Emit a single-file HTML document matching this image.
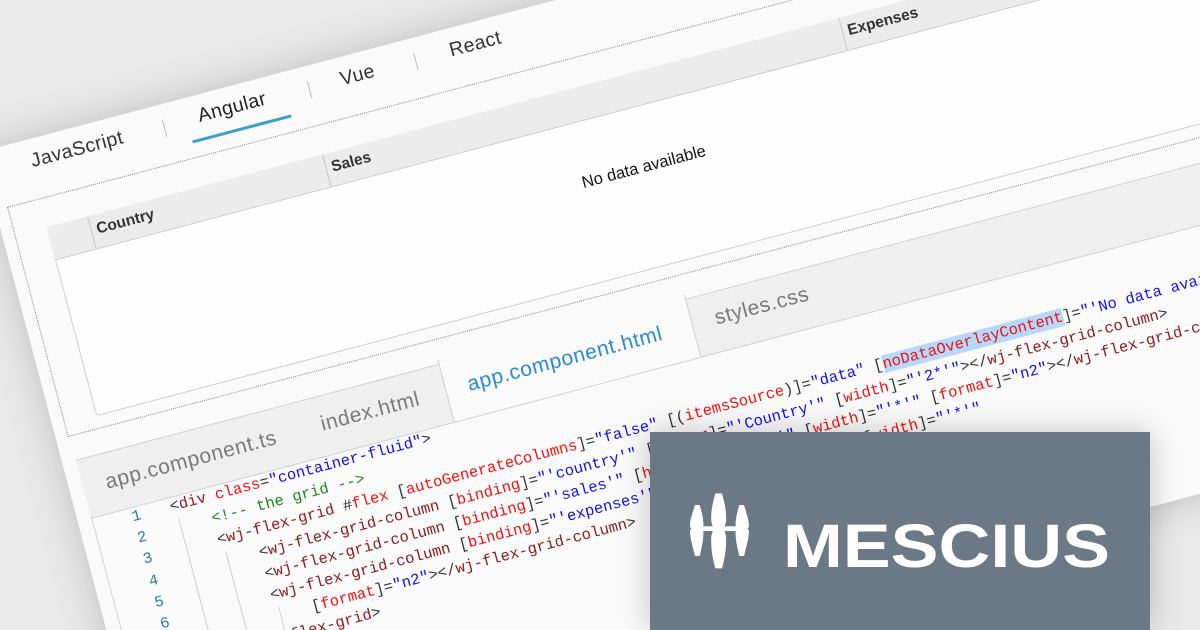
<!DOCTYPE html>
<html><head><meta charset="utf-8">
<style>
html,body{margin:0;padding:0;width:1200px;height:630px;overflow:hidden}
body{background:#e9e9e9;position:relative;font-family:"Liberation Sans",sans-serif}
#clip{position:absolute;left:0;top:0;width:1200px;height:630px;overflow:hidden}
#plane{position:absolute;left:7px;top:207px;width:0;height:0;transform-origin:0 0;transform:rotate(-14.8deg)}
#plane div{position:absolute}
.card{left:-12px;top:-60px;width:1320px;height:642px;background:#fafafa;box-shadow:0 0 40px rgba(0,0,0,.18)}
.tab{font-size:19.5px;line-height:1;color:#333;white-space:nowrap;letter-spacing:.4px}
.sep{width:1px;background:#bbb}
.dot{border:1.5px dotted #8a8a8a}
.grid{left:33px;top:30px;width:1186px;height:193px;border:1px solid #cfcfcf;background:#fdfdfd;border-radius:3px}
.hdr{left:33px;top:30px;width:1187px;height:33px;background:#ececec;border-bottom:1px solid #c8c8c8;border-radius:3px 3px 0 0}
.hs{width:1px;height:33px;top:30px;background:#c8c8c8}
.ht{font-size:15.5px;line-height:1;font-weight:bold;color:#333;top:37px}
.ctab{font-size:21px;line-height:1;color:#7a7a7a;white-space:nowrap;letter-spacing:.6px}
.code{left:2px;top:321px;width:1300px;height:300px;border-left:1px solid #d5d5d5;font-family:"Liberation Mono",monospace;font-size:15.5px;line-height:22.2px;white-space:pre;color:#333}
.ln{color:#2b7bb0;text-align:right;width:48px;left:0;top:0}
.src{left:78px;top:0}
.t{color:#8b1a1a}.a{color:#f01010}.v{color:#1010ee}.c{color:#1c8a1c}
.hl{background:#b6d8fb}
.g{width:1px;background:#cfcfcf}
#logo{position:absolute;left:650px;top:432px;width:500px;height:198px;background:#6b7886;box-shadow:0 0 30px rgba(0,0,0,.22)}
</style></head><body>
<div id="clip">
<div id="plane">
  <div class="card"></div>
  <div class="tab" style="left:35px;top:-47.5px">JavaScript</div>
  <div class="sep" style="left:172px;top:-45px;height:18px"></div>
  <div class="tab" style="left:208px;top:-48.5px;color:#222">Angular</div>
  <div style="left:196px;top:-17px;width:102px;height:3px;background:#3aa0c8"></div>
  <div class="sep" style="left:322px;top:-45px;height:18px"></div>
  <div class="tab" style="left:355px;top:-47.5px">Vue</div>
  <div class="sep" style="left:432px;top:-45px;height:18px"></div>
  <div class="tab" style="left:468px;top:-47.5px">React</div>
  <div class="dot" style="left:0;top:0;width:1260px;height:236px"></div>
  <div class="grid"></div>
  <div class="hdr"></div>
  <div class="hs" style="left:75px"></div>
  <div class="hs" style="left:318px"></div>
  <div class="hs" style="left:852px"></div>
  <div class="ht" style="left:81px">Country</div>
  <div class="ht" style="left:324px">Sales</div>
  <div class="ht" style="left:858px">Expenses</div>
  <div style="left:426px;top:116px;width:400px;text-align:center;font-size:16.5px;line-height:1;color:#111">No data available</div>
  <div style="left:2px;top:262px;width:1300px;height:59px;background:#efefef;border-top:1px solid #d2d2d2;border-bottom:1px solid #d2d2d2"></div>
  <div style="left:377px;top:258px;width:254px;height:64px;background:#fafafa;border-left:1px solid #cfcfcf;border-right:1px solid #cfcfcf"></div>
  <div class="ctab" style="left:25px;top:281px">app.component.ts</div>
  <div class="ctab" style="left:248px;top:280px">index.html</div>
  <div class="ctab" style="left:400px;top:279px;color:#2a8ad6">app.component.html</div>
  <div class="ctab" style="left:656px;top:278px">styles.css</div>
  <div class="code">
<div class="ln">1
2
3
4
5
6
7
8
9</div><div class="g" style="left:83px;top:24px;height:200px"></div><div class="g" style="left:120px;top:68px;height:130px"></div><div class="g" style="left:157px;top:135px;height:30px"></div><div class="src">&lt;<span class="t">div</span> <span class="a">class</span>=<span class="v">"container-fluid"</span>&gt;
    <span class="c">&lt;!-- the grid --&gt;</span>
    &lt;<span class="t">wj-flex-grid</span> #<span class="a">flex</span> [<span class="a">autoGenerateColumns</span>]=<span class="v">"false"</span> [(<span class="a">itemsSource</span>)]=<span class="v">"data"</span> [<span class="a hl">noDataOverlayContent</span>]=<span class="v">"'No data available'"</span>&gt;
        &lt;<span class="t">wj-flex-grid-column</span> [<span class="a">binding</span>]=<span class="v">"'country'"</span> [<span class="a">header</span>]=<span class="v">"'Country'"</span> [<span class="a">width</span>]=<span class="v">"'2*'"</span>&gt;&lt;/<span class="t">wj-flex-grid-column</span>&gt;
        &lt;<span class="t">wj-flex-grid-column</span> [<span class="a">binding</span>]=<span class="v">"'sales'"</span> [<span class="a">header</span>]=<span class="v">"'Sales'"</span> [<span class="a">width</span>]=<span class="v">"'*'"</span> [<span class="a">format</span>]=<span class="v">"n2"</span>&gt;&lt;/<span class="t">wj-flex-grid-column</span>&gt;
        &lt;<span class="t">wj-flex-grid-column</span> [<span class="a">binding</span>]=<span class="v">"'expenses'"</span> [<span class="a">header</span>]=<span class="v">"'Expenses'"</span> [<span class="a">width</span>]=<span class="v">"'*'"</span>
            [<span class="a">format</span>]=<span class="v">"n2"</span>&gt;&lt;/<span class="t">wj-flex-grid-column</span>&gt;
    &lt;/<span class="t">wj-flex-grid</span>&gt;
&lt;/<span class="t">div</span>&gt;</div></div>
</div>
</div>
<div id="logo">
  <svg width="500" height="198" viewBox="0 0 500 198" style="position:absolute;left:0;top:0">
    <g transform="translate(30,48) scale(0.3333)" fill="#fff">
      <path d="M45,75 L59,75 C68,105 71,122 70,140 L66,146 L70,152 C71,172 68,192 59,228 L45,228 C36,192 30,172 30,152 L34,146 L30,140 C29,122 36,105 45,75Z"/>
      <path d="M106,40 L126,40 C136,75 140,100 138,125 L132,146 L138,168 C140,195 136,230 126,265 L106,265 C96,230 92,195 94,168 L100,146 L94,125 C92,100 96,75 106,40Z"/>
      <path d="M178,75 L192,75 C201,105 207,122 207,140 L203,146 L207,152 C207,172 201,192 192,228 L178,228 C169,192 166,172 167,152 L171,146 L167,140 C166,122 169,105 178,75Z"/>
      <rect x="60" y="139" width="115" height="14"/>
    </g>
    <text x="133" y="135" font-family="Liberation Sans, sans-serif" font-weight="bold" font-size="61" fill="#fff" textLength="327" lengthAdjust="spacingAndGlyphs">MESCIUS</text>
  </svg>
</div>
</body></html>
